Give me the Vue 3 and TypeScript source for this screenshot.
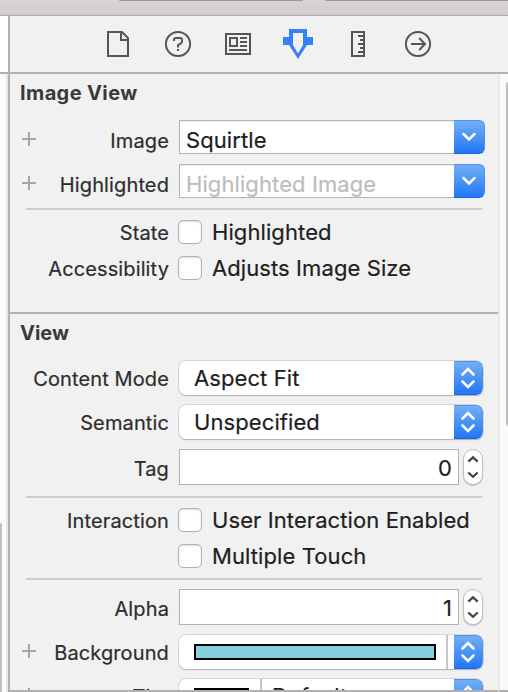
<script setup lang="ts">
import { ref } from 'vue'

interface Row {
  kind: 'combo' | 'check' | 'popup' | 'number' | 'color' | 'rule'
  label?: string
  text?: string
  plus?: boolean
  placeholder?: boolean
}

const imageRows = ref<Row[]>([
  { kind: 'combo', label: 'Image', text: 'Squirtle', plus: true },
  { kind: 'combo', label: 'Highlighted', text: 'Highlighted Image', plus: true, placeholder: true },
  { kind: 'rule' },
  { kind: 'check', label: 'State', text: 'Highlighted' },
  { kind: 'check', label: 'Accessibility', text: 'Adjusts Image Size' },
])

const viewRows = ref<Row[]>([
  { kind: 'popup', label: 'Content Mode', text: 'Aspect Fit' },
  { kind: 'popup', label: 'Semantic', text: 'Unspecified' },
  { kind: 'number', label: 'Tag', text: '0' },
  { kind: 'rule' },
  { kind: 'check', label: 'Interaction', text: 'User Interaction Enabled' },
  { kind: 'check', label: '', text: 'Multiple Touch' },
  { kind: 'rule' },
  { kind: 'number', label: 'Alpha', text: '1' },
  { kind: 'color', label: 'Background', plus: true },
  { kind: 'color', label: 'Tint', text: 'Default', plus: true },
])

const sections = [
  { title: 'Image View', name: 'image', rows: imageRows },
  { title: 'View', name: 'view', rows: viewRows },
]
</script>

<template>
  <div class="window">
    <div class="toolbar"><i class="seg first"></i><i class="seg second"></i></div>
    <div class="tabs">
      <div class="tabs-edge"></div>
      <div class="icons">
        <svg width="24" height="28" viewBox="0 0 24 28"><path d="M2 2H16L22 8V26H2ZM15 3V10H21" /></svg>
        <svg class="help" width="28" height="28" viewBox="0 0 28 28"><circle cx="14" cy="14" r="12.1" /><path d="M10 11V9.8Q10 8 12 8H16Q18 8 18 10V11.5Q18 13 16.5 13.7L14 15.1V17.5M14 19V21" /></svg>
        <svg class="news" width="28" height="28" viewBox="0 0 28 28"><path d="M2 4H26V24H2ZM6 8H13V16H6ZM16 8H23M16 12H23M16 16H23M5 20H23" /></svg>
        <svg class="attr" width="30" height="30" viewBox="0 0 30 30"><path fill-rule="evenodd" d="M6 0H24V8H30V16H24L15 30L6 16H0V8H6ZM10 4V16L15 24.5L20 16V4Z" /></svg>
        <svg class="ruler" width="16" height="28" viewBox="0 0 16 28"><path d="M2 2H14V26H2ZM8 6H14M10 10H14M8 14H14M10 18H14M8 22H14" /></svg>
        <svg class="conn" width="28" height="28" viewBox="0 0 28 28"><circle cx="14" cy="14" r="12.1" /><path d="M7 14H20.5M15.2 8L21 14L15.2 20" /></svg>
      </div>
    </div>
    <div class="body">
      <div class="left-gutter"><i class="left-thumb"></i></div>
      <div class="inspector">
        <section v-for="s in sections" :key="s.name" :class="s.name">
          <h2>{{ s.title }}</h2>
          <div class="rows">
            <template v-for="(r, i) in s.rows.value" :key="i">
              <hr v-if="r.kind === 'rule'" />
              <div v-else class="row" :class="r.kind">
                <svg class="plus" width="14" height="14" viewBox="0 0 14 14"><path v-if="r.plus" d="M0 7H14M7 0V14" /></svg>
                <span class="label">{{ r.label }}</span>
                <div v-if="r.kind === 'combo'" class="combo-box">
                  <span class="field" :class="{ dim: r.placeholder }">{{ r.text }}</span>
                  <span class="blue"><svg width="14" height="10" viewBox="0 0 14 10"><path d="M1.5 2L7 7.5L12.5 2" /></svg></span>
                </div>
                <label v-else-if="r.kind === 'check'" class="check-box"><i class="box"></i><span>{{ r.text }}</span></label>
                <div v-else-if="r.kind === 'number'" class="num-box">
                  <span class="num">{{ r.text }}</span>
                  <span class="stepper"><svg width="12" height="24" viewBox="0 0 12 24"><path d="M1.3 6.6L6 2.3L10.7 6.6M1.3 17.5L6 21.8L10.7 17.5" /></svg></span>
                </div>
                <div v-else class="popup-box">
                  <span v-if="r.kind === 'popup'" class="choice">{{ r.text }}</span>
                  <template v-else>
                    <span class="well" :class="{ narrow: r.text }"><i :class="{ black: r.text }"></i></span>
                    <span class="default">{{ r.text }}</span>
                  </template>
                  <span class="blue"><svg width="14" height="22" viewBox="0 0 14 22"><path d="M1.5 7.5L7 2L12.5 7.5M1.5 14.5L7 20L12.5 14.5" /></svg></span>
                </div>
              </div>
            </template>
          </div>
        </section>
      </div>
      <div class="right-gutter"><i class="right-thumb"></i></div>
    </div>
  </div>
</template>

<style>
body { margin: 0; overflow: hidden; }
</style>

<style scoped>
* { box-sizing: border-box; }
.window {
  width: 508px; height: 692px; overflow: hidden; display: flex; flex-direction: column;
  background: #f1f1f1; color: #1e1e1e;
  font-family: Inter, "Liberation Sans", sans-serif;
  letter-spacing: 0.09px;
  -webkit-text-stroke: 0.2px currentColor;
}
.toolbar {
  height: 16px; flex: none; display: flex; padding-left: 119px; gap: 22px;
  background: linear-gradient(#d7d3d7, #d0cdd1); border-bottom: 1px solid #aeacae;
}
.seg { height: 1px; width: 184px; background: #99979b; border-radius: 0 0 3px 3px; flex: none; }
.seg.second { width: 190px; }
.tabs { height: 58px; flex: none; display: flex; border-bottom: 2px solid #b1b1b1; }
.tabs-edge { width: 10px; background: #fff; border-right: 2px solid #b1b1b1; }
.icons { display: flex; align-items: center; padding-left: 96px; }
.icons svg { fill: none; stroke: #555; stroke-width: 2; flex: none; }
.icons .help { margin-left: 34px; }
.icons .news { margin-left: 32px; }
.icons .attr { margin-left: 31px; fill: #3582f6; stroke: none; }
.icons .ruler { margin-left: 37px; }
.icons .conn { margin-left: 38px; }
.body { flex: 1; min-height: 0; display: flex; }
.left-gutter { width: 8px; flex: none; background: #fafafa; border-right: 2px solid #e8e8e8; padding-top: 449px; }
.left-thumb { display: block; width: 2px; height: 169px; background: #c1c1c1; border-radius: 0 2px 0 0; }
.inspector {
  width: 490px; flex: none; overflow: hidden; background: #f1f1f1;
  border-left: 2px solid #b1b1b1; border-bottom: 2px solid #b1b1b1;
}
.right-gutter { width: 10px; background: #fafafa; border-left: 2px solid #e8e8e8; border-bottom: 2px solid #b1b1b1; padding: 8px 0 0 6px; }
.right-thumb { display: block; width: 2px; height: 344px; background: #c1c1c1; border-radius: 2px 0 0 2px; }
section.image { height: 240px; border-bottom: 2px solid #b1b1b1; }
h2 { margin: 0; padding: 6px 0 0 10px; height: 46px; font-size: 20px; line-height: 26px; font-weight: 700; color: #3a3a3a; letter-spacing: 0.38px; -webkit-text-stroke: 0; }
.view h2 { height: 47px; letter-spacing: 0; }
.rows { display: flex; flex-direction: column; }
hr { width: 456px; height: 2px; margin: 0 0 10px 16px; border: 0; background: #cbcbcb; flex: none; }
.row { display: flex; align-items: flex-start; padding-left: 12px; margin-bottom: 10px; height: 34px; flex: none; }
.row.check { height: 24px; margin-bottom: 12px; }
.row.check + hr { margin-top: -2px; margin-bottom: 9px; }
.row.number { height: 36px; }
.number + hr { margin-top: 1px; }
.plus { margin-top: 12px; fill: none; stroke: #a6a6a6; stroke-width: 2; flex: none; }
.color .plus { margin-top: 9px; }
.label { width: 143px; margin: 0 10px 0 -10px; flex: none; text-align: right; font-size: 20px; line-height: 34px; padding-top: 4px; color: #2d2d2d; letter-spacing: 0.12px; white-space: nowrap; }
.popup .label, .color .label { padding-top: 1px; }
.check .label { line-height: 24px; padding-top: 1px; }
.number .label { padding-top: 3px; }
.combo-box { width: 306px; height: 34px; display: flex; }
.field { width: 275px; background: #fff; border: 1px solid #b3b3b3; border-right: 0; padding: 3px 0 0 6px; font-size: 22px; line-height: 32px; box-shadow: inset 0 1px #eee; }
.field.dim { color: #bdbdbd; }
.blue { display: flex; align-items: center; justify-content: center; flex: none; background: linear-gradient(#72aff5, #2277f8); border: 1px solid #4c91ed; border-left: 0; border-bottom-color: #1867e9; }
.blue svg { fill: none; stroke: #fff; stroke-width: 2.5; stroke-linecap: round; }
.combo-box .blue { width: 31px; border-radius: 0 6px 6px 0; }
.popup-box { width: 304px; height: 34px; display: flex; flex: none; background: #fff; border-radius: 7px; box-shadow: 0 0 0 0.5px #bbb, 0 1px 1px #aaa; overflow: hidden; }
.popup-box .blue { width: 29px; border-radius: 0 6px 6px 0; }
.choice { width: 275px; padding-left: 15px; font-size: 22px; line-height: 34px; }
.check-box { display: flex; margin-left: -1px; font-size: 22px; line-height: 24px; gap: 10px; white-space: nowrap; }
.box { width: 24px; height: 24px; background: #fff; border: 1px solid #b1b1b1; border-radius: 5px; box-shadow: inset 0 1px 2px #ddd; }
.num-box { display: flex; gap: 4px; }
.num { width: 280px; height: 36px; background: #fff; border: 1px solid #b3b3b3; padding: 1px 6px 0 0; font-size: 22px; line-height: 34px; text-align: right; }
.stepper { width: 20px; height: 36px; border-radius: 10px; background: #fff; border: 1px solid #c0c0c0; box-shadow: 0 1px 1px #bbb; display: flex; align-items: center; justify-content: center; }
.stepper svg { fill: none; stroke: #444; stroke-width: 2.3; }
.well { width: 269px; padding: 9px 10px 9px 15px; border-right: 2px solid #c6c6c6; flex: none; }
.well i { display: block; height: 16px; background: #87d0de; border: 2px solid #000; }
.well.narrow { width: 83px; padding-right: 11px; }
.well i.black { background: #000; }
.default { flex: 1; padding-left: 10px; font-size: 22px; line-height: 34px; min-width: 0; }
.well:not(.narrow) + .default { padding: 0; }
</style>
